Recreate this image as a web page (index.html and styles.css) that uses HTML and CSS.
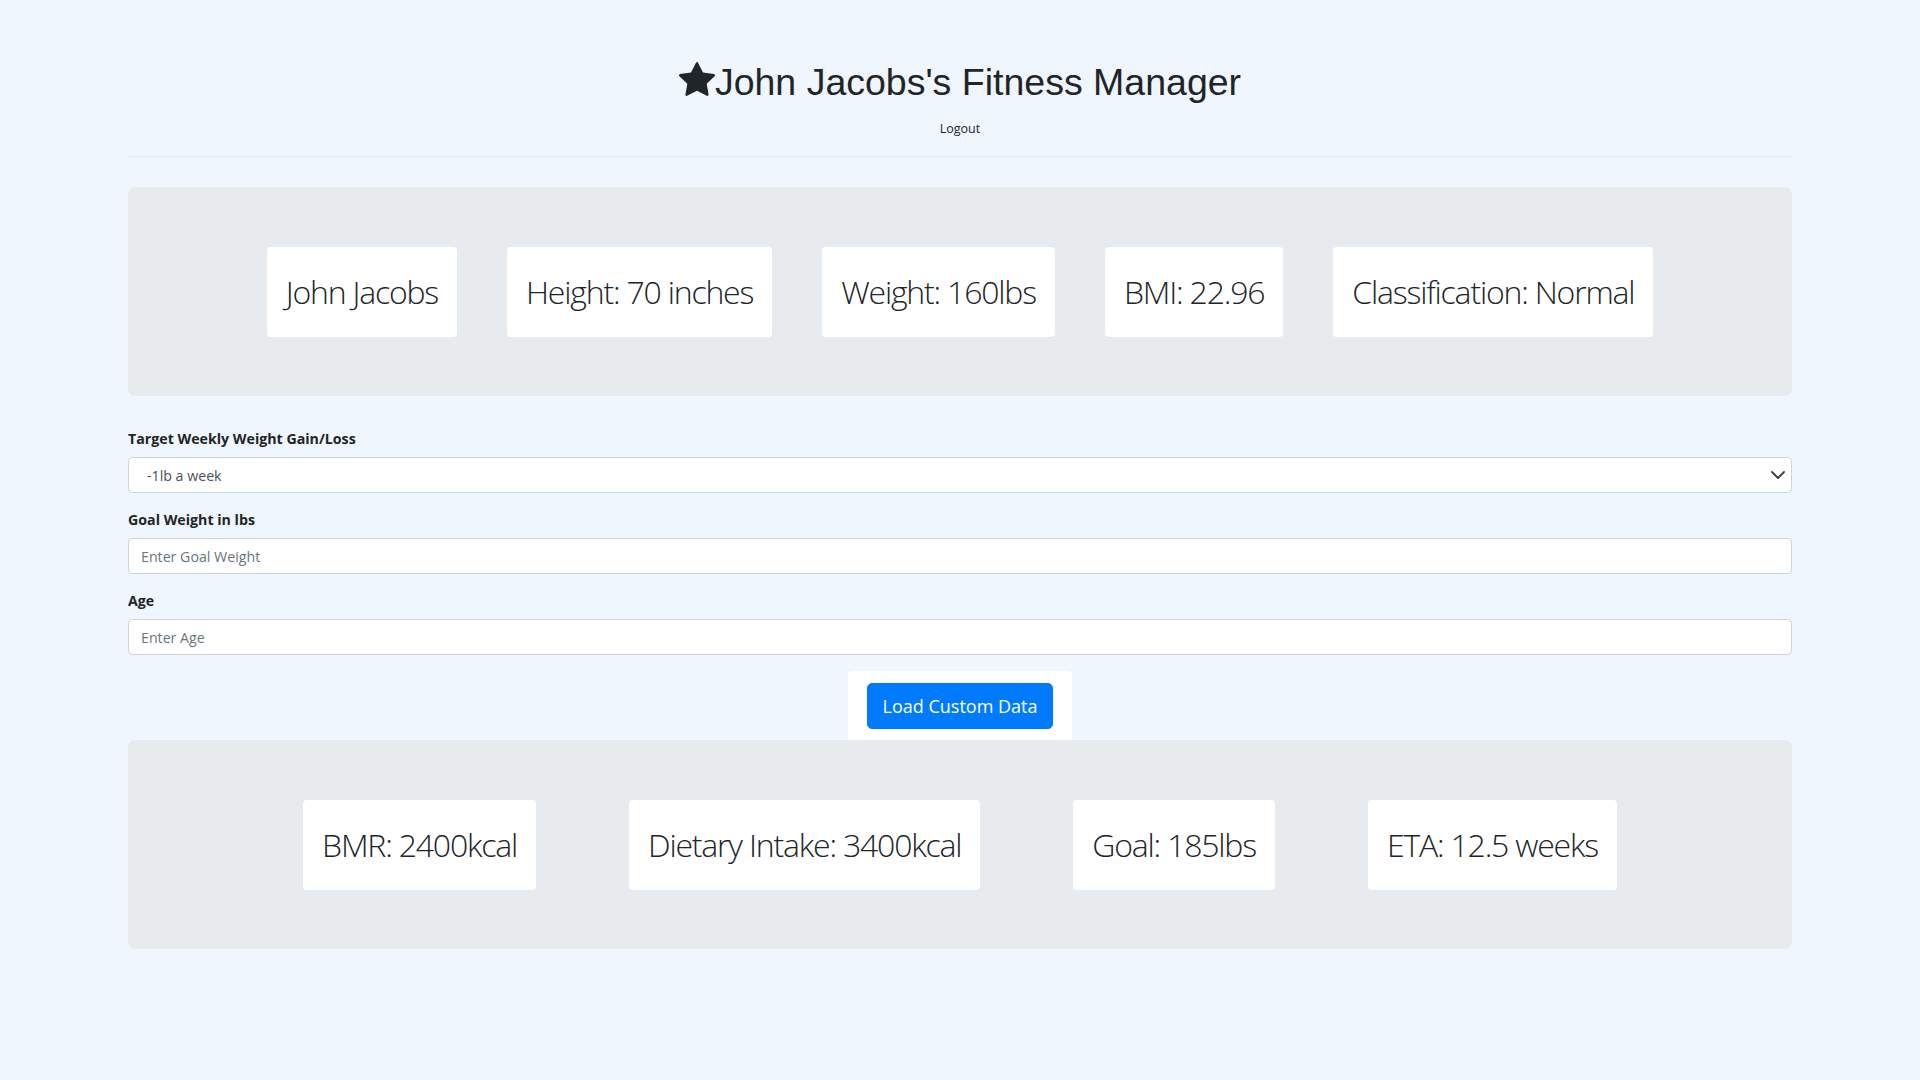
FILE: index.html
```html
<!DOCTYPE html>
<html lang="en">
<head>
<meta charset="utf-8">
<title>John Jacobs's Fitness Manager</title>
<link rel="stylesheet" href="styles.css">
</head>
<body>
<div class="page">
  <header class="header">
    <h1 class="title"><svg class="star" viewBox="0 0 16 16" width="36" height="36" aria-hidden="true"><path d="M3.612 15.443c-.386.198-.824-.149-.746-.592l.83-4.730L.173 6.765c-.329-.314-.158-.888.283-.95l4.898-.696L7.538.792c.197-.39.73-.39.927 0l2.184 4.327 4.898.696c.441.062.612.636.282.95l-3.522 3.356.83 4.730c.078.443-.36.79-.746.592L8 13.187l-4.389 2.256z"/></svg>John Jacobs's Fitness Manager</h1>
    <div class="logout-line"><a class="logout" href="#">Logout</a></div>
  </header>
  <hr class="divider">

  <section class="jumbo jumbo-top">
    <div class="stat-row row-top">
      <div class="stat">John Jacobs</div>
      <div class="stat">Height: 70 inches</div>
      <div class="stat">Weight: 160lbs</div>
      <div class="stat">BMI: 22.96</div>
      <div class="stat">Classification: Normal</div>
    </div>
  </section>

  <form class="form">
    <div class="group">
      <label class="label">Target Weekly Weight Gain/Loss</label>
      <div class="select">
        <span class="select-value">-1lb a week</span>
        <svg class="chevron" viewBox="0 0 14 8" width="14" height="8" aria-hidden="true"><path d="M1 1l6 6 6-6" fill="none" stroke="#3a3f44" stroke-width="1.8" stroke-linecap="round" stroke-linejoin="round"/></svg>
      </div>
    </div>
    <div class="group">
      <label class="label">Goal Weight in lbs</label>
      <input class="input" type="text" placeholder="Enter Goal Weight">
    </div>
    <div class="group">
      <label class="label">Age</label>
      <input class="input" type="text" placeholder="Enter Age">
    </div>
  </form>

  <div class="action-wrap">
    <div class="action"><button class="btn" type="button">Load Custom Data</button></div>
  </div>

  <section class="jumbo jumbo-bottom">
    <div class="stat-row row-bottom">
      <div class="stat">BMR: 2400kcal</div>
      <div class="stat">Dietary Intake: 3400kcal</div>
      <div class="stat">Goal: 185lbs</div>
      <div class="stat">ETA: 12.5 weeks</div>
    </div>
  </section>
</div>
</body>
</html>
```
FILE: styles.css
```css
* { box-sizing: border-box; }

html, body {
  margin: 0;
  padding: 0;
  background: #eff6fe;
}

body {
  font-family: "Open Sans", "Noto Sans", sans-serif;
  color: #212529;
  font-size: 14px;
}

.page {
  max-width: 1664px;
  margin: 0 auto;
  padding-bottom: 80px;
}

.header {
  text-align: center;
  padding-top: 60px;
}

.title {
  margin: 0;
  font-family: "Liberation Sans", Arial, sans-serif;
  font-weight: 400;
  font-size: 37.5px;
  line-height: 45px;
  color: #212529;
}

.star {
  fill: #212529;
  vertical-align: -2px;
}

.logout-line {
  margin-top: 13px;
  line-height: 19px;
}

.logout {
  font-size: 12.5px;
  color: #212529;
  text-decoration: none;
}

.divider {
  margin: 18px 0 0;
  border: 0;
  border-top: 1px solid #e2e7ec;
  height: 0;
}

.jumbo {
  background: #e7ebee;
  border-radius: 7px;
  padding: 60px 0 59px;
}

.jumbo-top {
  margin-top: 30px;
}

.stat-row {
  display: flex;
  justify-content: center;
}

.row-top { gap: 50px; }
.row-bottom { gap: 93px; }

.stat {
  background: #ffffff;
  border-radius: 4px;
  padding: 24px 19px;
  font-family: "Open Sans", "Noto Sans", sans-serif;
  font-size: 32px;
  font-weight: 300;
  letter-spacing: -1.2px;
  line-height: 42px;
  color: #212529;
  white-space: nowrap;
}

.form {
  margin-top: 32px;
}

.group {
  margin-bottom: 16px;
}

.label {
  display: block;
  font-weight: 700;
  font-size: 14.2px;
  line-height: 21px;
  margin-bottom: 8px;
  color: #212529;
}

.select,
.input {
  width: 100%;
  height: 36px;
  border: 1px solid #ced4da;
  border-radius: 4px;
  background: #ffffff;
  font-family: "Open Sans", "Noto Sans", sans-serif;
  font-size: 14.2px;
}

.select {
  display: flex;
  align-items: center;
  justify-content: space-between;
  padding: 0 6px 0 18px;
  color: #495057;
}

.chevron {
  display: block;
}

.input {
  display: block;
  padding: 0 12px;
  color: #495057;
  outline: none;
}

.input::placeholder {
  color: #6c757d;
  opacity: 1;
}

.action-wrap {
  display: flex;
  justify-content: center;
}

.action {
  background: #ffffff;
  border-radius: 4px 4px 0 0;
  padding: 12px 19px 11px;
}

.btn {
  display: block;
  background: #007bff;
  color: #ffffff;
  border: 1px solid #007bff;
  border-radius: 5px;
  font-family: "Open Sans", "Noto Sans", sans-serif;
  font-size: 18px;
  line-height: 30px;
  padding: 7px 15px;
  cursor: pointer;
}
```
